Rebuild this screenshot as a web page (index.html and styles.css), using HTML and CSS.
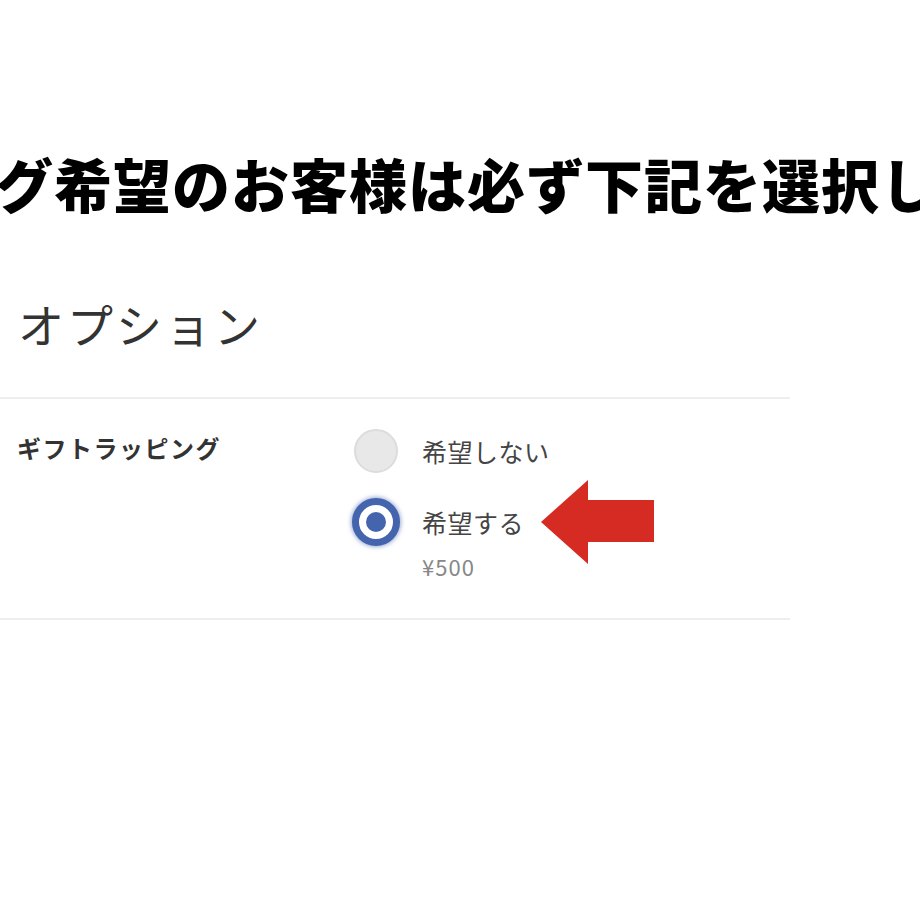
FILE: index.html
```html
<!DOCTYPE html>
<html lang="ja">
<head>
    <meta charset="UTF-8">
    <title>オプション</title>
    <link rel="stylesheet" href="styles.css">
</head>
<body>
    <div class="page">
        <h1 class="notice">グ希望のお客様は必ず下記を選択し</h1>

        <h2 class="section-title">オプション</h2>

        <div class="option-row">
            <div class="option-label">ギフトラッピング</div>
            <div class="choices">
                <label class="choice">
                    <span class="radio"></span>
                    <span class="choice-text">希望しない</span>
                </label>
                <label class="choice">
                    <span class="radio checked"></span>
                    <span class="choice-text">希望する</span>
                    <svg class="arrow" width="114" height="84" viewBox="0 0 114 84">
                        <polygon points="0,42 47,0 47,20 113,20 113,62 47,62 47,84" fill="#d52b23"/>
                    </svg>
                </label>
                <div class="price">¥500</div>
            </div>
        </div>
    </div>
</body>
</html>
```
FILE: styles.css
```css
body {
    margin: 0;
    background: #fff;
    font-family: "Noto Sans CJK JP", "Noto Sans", sans-serif;
    color: #333;
}

.page {
    width: 920px;
    height: 920px;
    overflow: hidden;
}

.notice {
    margin: 138px 0 0 -5px;
    font-size: 58px;
    font-weight: 900;
    line-height: 90px;
    color: #000;
    white-space: nowrap;
    letter-spacing: 1px;
}

.section-title {
    margin: 65px 0 0 0;
    padding: 0 0 44px 18px;
    width: 790px;
    box-sizing: border-box;
    font-size: 46px;
    font-weight: 400;
    letter-spacing: 3px;
    line-height: 60px;
    color: #333;
    border-bottom: 2px solid #eee;
}

.option-row {
    display: flex;
    width: 790px;
    border-bottom: 2px solid #eee;
    padding: 28px 0 36px;
}

.option-label {
    width: 352px;
    padding-left: 17px;
    box-sizing: border-box;
    font-size: 24px;
    font-weight: 700;
    letter-spacing: 1.5px;
    line-height: 42px;
    color: #333;
}

.choices {
    display: flex;
    flex-direction: column;
    gap: 23px;
}

.choice {
    display: flex;
    align-items: center;
    height: 48px;
}

.radio {
    width: 44px;
    height: 44px;
    margin: 0 2px;
    border-radius: 50%;
    background: #e8e8e8;
    border: 2px solid #dcdcdc;
    box-sizing: border-box;
}

.radio.checked {
    width: 48px;
    height: 48px;
    margin: 0;
    background: #fff;
    border: 7px solid #4465ad;
    box-shadow: 0 0 4px 1px rgba(68, 101, 173, 0.55);
    position: relative;
}

.radio.checked::after {
    content: "";
    position: absolute;
    left: 50%;
    top: 50%;
    width: 20px;
    height: 20px;
    margin: -10px 0 0 -10px;
    border-radius: 50%;
    background: #4465ad;
}

.choice-text {
    margin-left: 22px;
    font-size: 25px;
    letter-spacing: 0.5px;
    color: #444;
}

.arrow {
    margin-left: 17px;
    display: block;
}

.price {
    margin: -19px 0 0 70px;
    font-size: 22px;
    color: #888;
    letter-spacing: 1px;
}
```
